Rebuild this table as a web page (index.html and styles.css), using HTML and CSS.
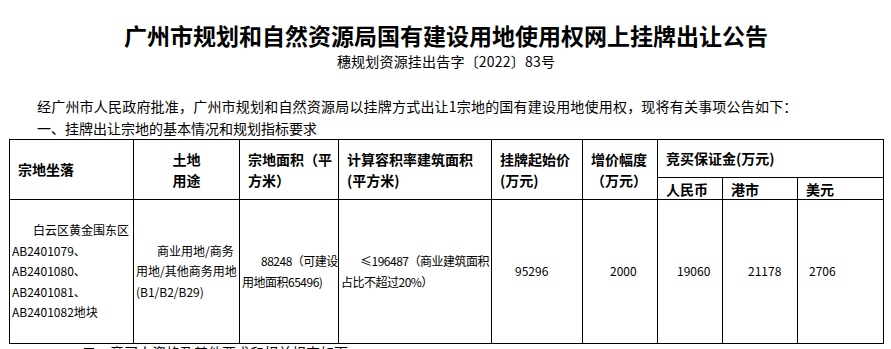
FILE: index.html
```html
<!DOCTYPE html>
<html lang="zh-CN">
<head>
<meta charset="utf-8">
<title>广州市规划和自然资源局国有建设用地使用权网上挂牌出让公告</title>
<link rel="stylesheet" href="styles.css">
</head>
<body>
<div class="page">
  <h1 class="title">广州市规划和自然资源局国有建设用地使用权网上挂牌出让公告</h1>
  <p class="docno">穗规划资源挂出告字〔2022〕83号</p>
  <p class="para first">经广州市人民政府批准，广州市规划和自然资源局以挂牌方式出让1宗地的国有建设用地使用权，现将有关事项公告如下：</p>
  <p class="para">一、挂牌出让宗地的基本情况和规划指标要求</p>
  <table class="grid">
    <colgroup>
      <col class="c1"><col class="c2"><col class="c3"><col class="c4"><col class="c5"><col class="c6"><col class="c7"><col class="c8"><col class="c9">
    </colgroup>
    <thead>
      <tr class="h1row">
        <th rowspan="2">宗地坐落</th>
        <th rowspan="2" class="center">土地<br>用途</th>
        <th rowspan="2" class="narrow">宗地面积（平<br>方米）</th>
        <th rowspan="2">计算容积率建筑面积<br>(平方米)</th>
        <th rowspan="2">挂牌起始价<br>(万元)</th>
        <th rowspan="2">增价幅度<br>（万元）</th>
        <th colspan="3">竞买保证金(万元)</th>
      </tr>
      <tr class="h2row">
        <th>人民币</th>
        <th>港市</th>
        <th>美元</th>
      </tr>
    </thead>
    <tbody>
      <tr class="brow">
        <td><span class="ind">白云区黄金围东区</span><br>AB2401079、<br>AB2401080、<br>AB2401081、<br>AB2401082地块</td>
        <td><span class="ind">商业用地/商务</span><br>用地/其他商务用地<br>(B1/B2/B29)</td>
        <td class="tight"><span class="ind">88248（可建设</span><br>用地面积65496)</td>
        <td class="tight"><span class="ind">≤196487（商业建筑面积</span><br>占比不超过20%）</td>
        <td class="p23">95296</td>
        <td class="p27">2000</td>
        <td class="p19">19060</td>
        <td class="p25">21178</td>
        <td class="p11">2706</td>
      </tr>
    </tbody>
  </table>
  <p class="after">二、竞买人资格及其他要求和相关规定如下：</p>
</div>
</body>
</html>
```

FILE: styles.css
```css
html, body {
  margin: 0;
  padding: 0;
  background: #ffffff;
  color: #000000;
}

body {
  font-family: "Noto Sans CJK SC", "Noto Sans", sans-serif;
  overflow: hidden;
}

.page {
  width: 874px;
  padding: 22px 8px 0 9px;
}

.title {
  margin: 0;
  font-size: 23px;
  line-height: 27px;
  font-weight: 700;
  text-align: center;
}

.docno {
  margin: 2px 0 0;
  font-size: 14px;
  line-height: 20px;
  text-align: center;
  letter-spacing: 0.2px;
}

.para {
  margin: 0;
  font-size: 14px;
  line-height: 22px;
  text-indent: 28px;
  white-space: nowrap;
}

.para.first {
  margin-top: 24px;
  letter-spacing: 0.2px;
}

.grid {
  width: 874px;
  table-layout: fixed;
  border-collapse: collapse;
  border: 1px solid #000;
}

.c1 { width: 124px; }
.c2 { width: 106px; }
.c3 { width: 99px; }
.c4 { width: 153px; }
.c5 { width: 91px; }
.c6 { width: 75px; }
.c7 { width: 65px; }
.c8 { width: 75px; }
.c9 { width: 86px; }

.grid th,
.grid td {
  border: 1px solid #000;
  vertical-align: middle;
  text-align: left;
  padding: 0 2px 0 8px;
  white-space: nowrap;
  overflow: hidden;
}

.grid th {
  font-size: 14px;
  line-height: 21px;
  font-weight: 700;
}

.grid th.center {
  text-align: center;
  padding: 0;
}

.h1row { height: 38px; }
.h2row { height: 22px; }
.h2row th { line-height: 20px; }

.grid td {
  font-size: 12px;
  line-height: 20.4px;
  padding: 0 0 0 2px;
}

.brow { height: 144px; }

.ind {
  padding-left: 21px;
}

.tight {
  letter-spacing: -0.5px;
}

.tight .ind {
  padding-left: 19px;
}

.grid td.p23 { padding-left: 23px; }
.grid td.p27 { padding-left: 27px; }
.grid td.p19 { padding-left: 19px; }
.grid td.p25 { padding-left: 25px; }
.grid td.p11 { padding-left: 11px; }

.after {
  margin: 0;
  padding-left: 73px;
  font-size: 14px;
  line-height: 16px;
  white-space: nowrap;
}
```
